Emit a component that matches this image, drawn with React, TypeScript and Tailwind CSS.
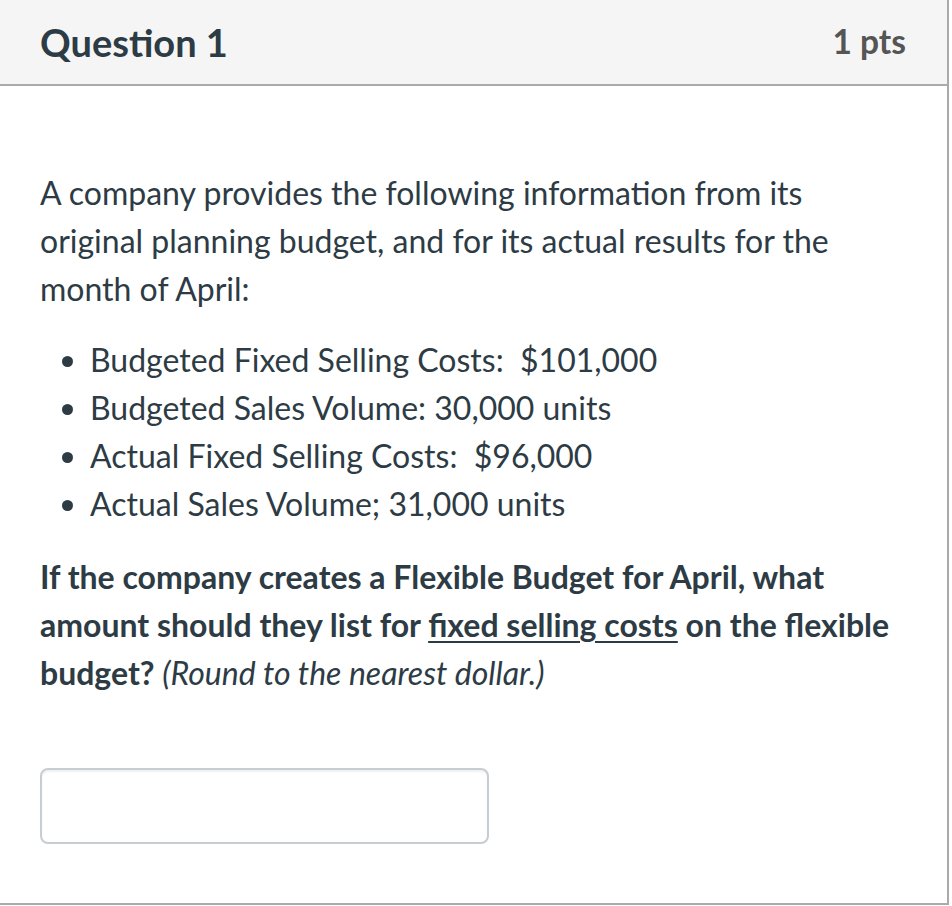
import React from "react";

export default function App() {
  return (
    <div className="w-[949px] h-[905px] bg-white border-r-2 border-b-2 border-[#aaaaaa] font-['Lato',_'Noto_Sans',_sans-serif] text-[#2d3b45] box-border">
      <div className="h-[86px] bg-[#f5f5f5] border-b-2 border-[#aaaaaa] flex items-center justify-between pl-[40px] pr-[41px] box-border">
        <h2 className="text-[38px] font-bold leading-none text-[#2d3b45]">Question 1</h2>
        <div className="text-[33.5px] font-bold leading-none text-[#555555]">1 pts</div>
      </div>
      <div className="pl-[40px] pr-[44px] pt-[83px]">
        <p className="text-[32px] leading-[48px]">
          A company provides the following information from its original planning budget, and for its actual results for the month of April:
        </p>
        <ul className="list-disc pl-[50px] mt-[23px] text-[32px] leading-[48px]">
          <li>Budgeted Fixed Selling Costs:&nbsp; $101,000</li>
          <li>Budgeted Sales Volume: 30,000 units</li>
          <li>Actual Fixed Selling Costs:&nbsp; $96,000</li>
          <li>Actual Sales Volume; 31,000 units</li>
        </ul>
        <p className="mt-[25px] text-[32px] leading-[48px] font-bold">
          If the company creates a Flexible Budget for April, what amount should they list for{" "}
          <span className="underline decoration-2 underline-offset-4">fixed selling costs</span> on the flexible budget?{" "}
          <em className="font-normal italic">(Round to the nearest dollar.)</em>
        </p>
        <div className="mt-[71px] w-[449px] h-[76px] border-2 border-[#c7cdd1] rounded-[8px] bg-white shadow-[inset_0_2px_2px_rgba(0,0,0,0.06)] box-border"></div>
      </div>
    </div>
  );
}
